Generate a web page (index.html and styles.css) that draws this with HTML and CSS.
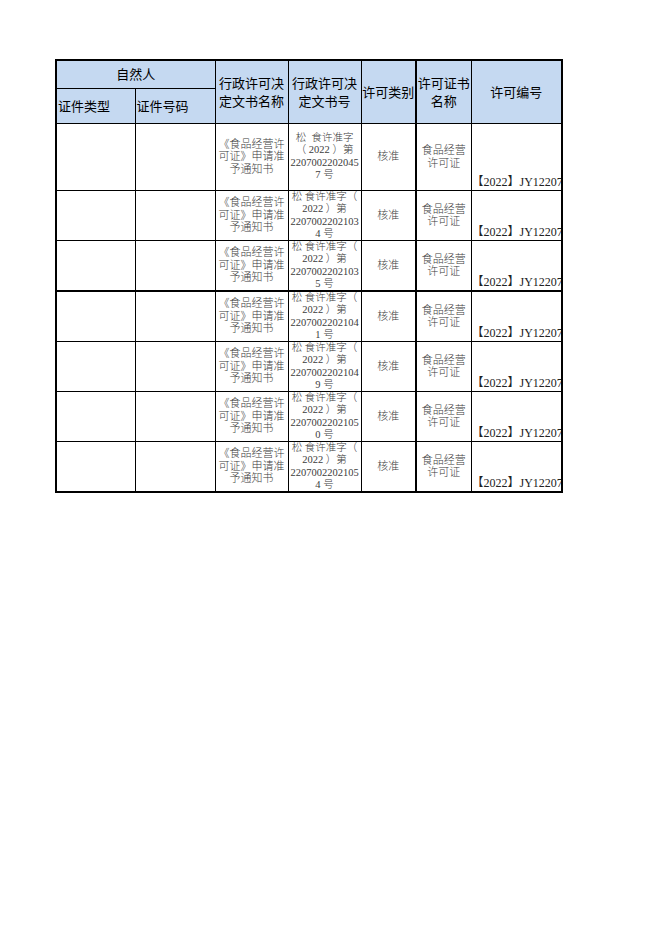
FILE: index.html
```html
<!DOCTYPE html>
<html lang="zh">
<head>
<meta charset="utf-8">
<title>许可</title>
<link rel="stylesheet" href="styles.css">
</head>
<body>
<table class="sheet">
  <colgroup>
    <col class="w1"><col class="w2"><col class="w3"><col class="w4"><col class="w5"><col class="w6"><col class="w7">
  </colgroup>
  <thead>
    <tr class="h1">
      <th colspan="2" class="hd">自然人</th>
      <th rowspan="2" class="hd">行政许可决<br>定文书名称</th>
      <th rowspan="2" class="hd">行政许可决<br>定文书号</th>
      <th rowspan="2" class="hd">许可类别</th>
      <th rowspan="2" class="hd thickl">许可证书<br>名称</th>
      <th rowspan="2" class="hd">许可编号</th>
    </tr>
    <tr class="h2">
      <th class="hd left">证件类型</th>
      <th class="hd left">证件号码</th>
    </tr>
  </thead>
  <tbody>
    <tr class="r1">
      <td></td><td></td>
      <td class="doc">《食品经营许<br>可证》申请准<br>予通知书</td>
      <td class="num"><div class="clip">松&nbsp;&nbsp;食许准字<br>（ 2022 ）第<br>2207002202045<br>7 号</div></td>
      <td class="mid">核准</td>
      <td class="mid thickl">食品经营<br>许可证</td>
      <td class="code"><div class="cw">【2022】JY12207</div></td>
    </tr>
    <tr class="r">
      <td></td><td></td>
      <td class="doc">《食品经营许<br>可证》申请准<br>予通知书</td>
      <td class="num"><div class="clip">松 食许准字（<br>2022 ）第<br>2207002202103<br>4 号</div></td>
      <td class="mid">核准</td>
      <td class="mid thickl">食品经营<br>许可证</td>
      <td class="code"><div class="cw">【2022】JY12207</div></td>
    </tr>
    <tr class="r">
      <td></td><td></td>
      <td class="doc">《食品经营许<br>可证》申请准<br>予通知书</td>
      <td class="num"><div class="clip">松 食许准字（<br>2022 ）第<br>2207002202103<br>5 号</div></td>
      <td class="mid">核准</td>
      <td class="mid thickl">食品经营<br>许可证</td>
      <td class="code"><div class="cw">【2022】JY12207</div></td>
    </tr>
    <tr class="r thickt">
      <td></td><td></td>
      <td class="doc">《食品经营许<br>可证》申请准<br>予通知书</td>
      <td class="num"><div class="clip">松 食许准字（<br>2022 ）第<br>2207002202104<br>1 号</div></td>
      <td class="mid">核准</td>
      <td class="mid thickl">食品经营<br>许可证</td>
      <td class="code"><div class="cw">【2022】JY12207</div></td>
    </tr>
    <tr class="r">
      <td></td><td></td>
      <td class="doc">《食品经营许<br>可证》申请准<br>予通知书</td>
      <td class="num"><div class="clip">松 食许准字（<br>2022 ）第<br>2207002202104<br>9 号</div></td>
      <td class="mid">核准</td>
      <td class="mid thickl">食品经营<br>许可证</td>
      <td class="code"><div class="cw">【2022】JY12207</div></td>
    </tr>
    <tr class="r">
      <td></td><td></td>
      <td class="doc">《食品经营许<br>可证》申请准<br>予通知书</td>
      <td class="num"><div class="clip">松 食许准字（<br>2022 ）第<br>2207002202105<br>0 号</div></td>
      <td class="mid">核准</td>
      <td class="mid thickl">食品经营<br>许可证</td>
      <td class="code"><div class="cw">【2022】JY12207</div></td>
    </tr>
    <tr class="r">
      <td></td><td></td>
      <td class="doc">《食品经营许<br>可证》申请准<br>予通知书</td>
      <td class="num"><div class="clip">松 食许准字（<br>2022 ）第<br>2207002202105<br>4 号</div></td>
      <td class="mid">核准</td>
      <td class="mid thickl">食品经营<br>许可证</td>
      <td class="code"><div class="cw">【2022】JY12207</div></td>
    </tr>
  </tbody>
</table>
</body>
</html>
```

FILE: styles.css
```css
html, body {
  margin: 0;
  padding: 0;
  background: #ffffff;
}
body {
  padding: 59px 0 0 55px;
}
.sheet {
  border-collapse: collapse;
  table-layout: fixed;
  width: 507px;
  border: 2px solid #000;
}
.w1 { width: 79px; }
.w2 { width: 80px; }
.w3 { width: 73px; }
.w4 { width: 73px; }
.w5 { width: 55px; }
.w6 { width: 55px; }
.w7 { width: 91px; }

th, td {
  border: 1px solid #000;
  padding: 0;
  overflow: hidden;
}
.hd {
  background: #c5d9f1;
  font-family: "Noto Sans CJK SC", sans-serif;
  font-weight: 400;
  font-size: 13px;
  line-height: 18px;
  color: #000;
  text-align: center;
  vertical-align: middle;
}
.hd.left {
  text-align: left;
  padding-left: 1px;
}
.h1 { height: 28px; }
.h2 { height: 35px; }
.r1 { height: 67px; }
.r { height: 50px; }
.thickl { border-left: 2px solid #000; }
.thickt td { border-top: 2px solid #000; }

td {
  font-family: "Liberation Serif", "Noto Sans CJK SC", serif;
  font-weight: 300;
  font-size: 11px;
  line-height: 12.5px;
  color: #3c3c3c;
  text-align: center;
  vertical-align: middle;
}
.doc {
  font-size: 11px;
}
.num {
  font-size: 10.5px;
}
.r .num .clip {
  height: 49px;
  overflow: hidden;
}
.code {
  vertical-align: bottom;
  text-align: left;
}
.cw {
  white-space: nowrap;
  overflow: hidden;
  font-size: 12px;
  line-height: 14px;
  color: #222;
  padding-bottom: 1px;
}
```
